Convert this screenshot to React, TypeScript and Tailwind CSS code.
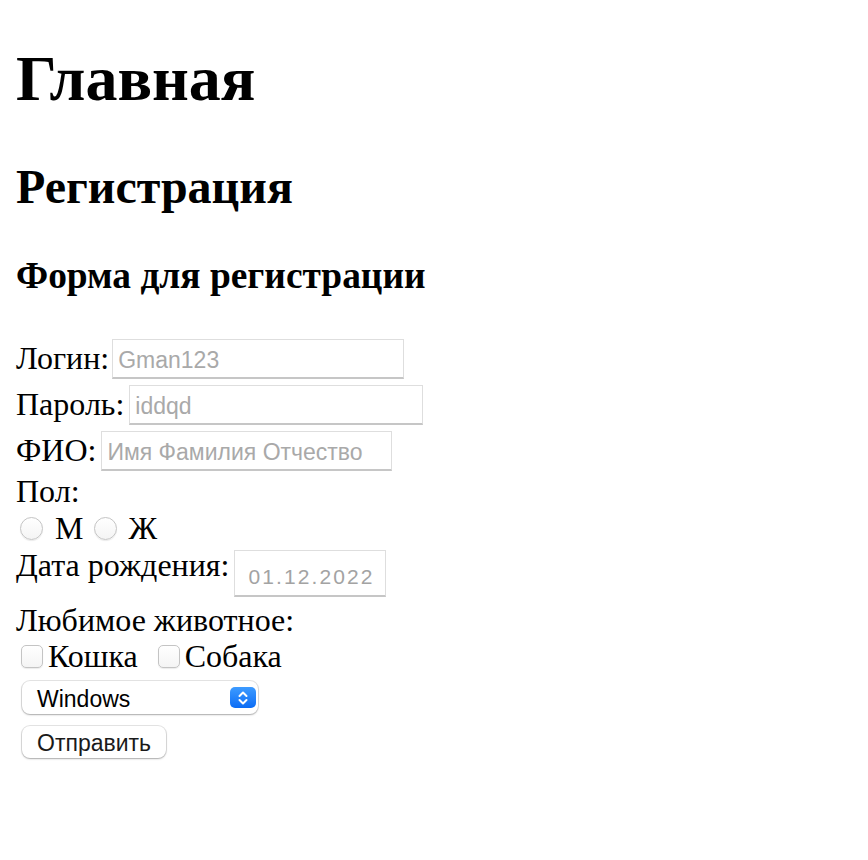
import React from 'react';

const fieldClass =
  "h-[40px] border border-[#dedede] border-b-2 border-b-[#c6c6c6] bg-white px-[5px] pt-[3px] font-['Liberation_Sans',sans-serif] text-[23px] text-black placeholder:text-[#a9a9a9] outline-none";

function Radio() {
  return (
    <span className="inline-block h-[23px] w-[23px] rounded-full border border-[#c4c4c4] bg-gradient-to-b from-white to-[#f4f4f4] shadow-[0_1px_1px_rgba(0,0,0,0.08)]" />
  );
}

function Checkbox() {
  return (
    <span className="inline-block h-[23px] w-[22px] rounded-[5px] border border-[#c4c4c4] bg-gradient-to-b from-white to-[#f4f4f4] shadow-[0_1px_1px_rgba(0,0,0,0.08)]" />
  );
}

export default function App() {
  return (
    <div className="min-h-[860px] bg-white px-[16px] pt-[42px] font-['Liberation_Serif',serif] text-black">
      <h1 className="text-[64px] font-bold leading-[74px]">Главная</h1>
      <h2 className="mt-[43px] text-[48px] font-bold leading-[55px]">Регистрация</h2>
      <h3 className="mt-[40px] text-[37.44px] font-bold leading-[43px]">Форма для регистрации</h3>

      <form className="mt-[38px] text-[32px] leading-[37px]">
        <div className="flex h-[46px] items-center">
          <span>Логин:</span>
          <input className={`${fieldClass} ml-[3px] mt-[2px] w-[292px]`} placeholder="Gman123" />
        </div>
        <div className="flex h-[46px] items-center">
          <span>Пароль:</span>
          <input className={`${fieldClass} ml-[5px] mt-[2px] w-[294px]`} placeholder="iddqd" />
        </div>
        <div className="flex h-[46px] items-center">
          <span>ФИО:</span>
          <input className={`${fieldClass} ml-[5px] mt-[2px] w-[291px]`} placeholder="Имя Фамилия Отчество" />
        </div>

        <div className="h-[37px]">Пол:</div>
        <div className="flex h-[37px] items-center">
          <span className="ml-[4px] mr-[12px] flex"><Radio /></span>
          <span>М</span>
          <span className="ml-[11px] mr-[11px] flex"><Radio /></span>
          <span>Ж</span>
        </div>

        <div className="flex h-[55px] items-start">
          <span>Дата рождения:</span>
          <div className="ml-[5px] mt-[3px] flex h-[47px] w-[152px] items-center border border-[#dedede] border-b-2 border-b-[#c6c6c6] pl-[13px] pt-[6px] font-['Liberation_Sans',sans-serif] text-[21px] tracking-[2.1px] text-[#a3a3a3]">
            01.12.2022
          </div>
        </div>

        <div className="h-[36px]">Любимое животное:</div>
        <div className="flex h-[37px] items-center">
          <span className="ml-[5px] mr-[5px] flex"><Checkbox /></span>
          <span>Кошка</span>
          <span className="ml-[20px] mr-[5px] flex"><Checkbox /></span>
          <span>Собака</span>
        </div>

        <div className="ml-[6px] mt-[6px] flex h-[33px] w-[236px] items-center justify-between rounded-[8px] bg-white pl-[15px] pr-[2px] font-['Liberation_Sans',sans-serif] text-[23px] leading-none text-black shadow-[0_0_0_1px_rgba(0,0,0,0.1),0_1px_2px_rgba(0,0,0,0.25)]">
          <span className="pt-[3px]">Windows</span>
          <span className="flex h-[21px] w-[26px] items-center justify-center rounded-[5px] bg-gradient-to-b from-[#3d9bff] to-[#0a6cf5]">
            <svg width="12" height="16" viewBox="0 0 12 16" fill="none" stroke="white" strokeWidth="2" strokeLinecap="round" strokeLinejoin="round">
              <path d="M2.5 6 L6 2.5 L9.5 6" />
              <path d="M2.5 10 L6 13.5 L9.5 10" />
            </svg>
          </span>
        </div>

        <button
          type="button"
          className="ml-[6px] mt-[12px] flex h-[32px] w-[144px] items-center rounded-[8px] bg-white pl-[15px] pt-[2px] font-['Liberation_Sans',sans-serif] text-[23px] leading-none text-[#1a1a1a] shadow-[0_0_0_1px_rgba(0,0,0,0.1),0_1px_2px_rgba(0,0,0,0.25)]"
        >
          Отправить
        </button>
      </form>
    </div>
  );
}
